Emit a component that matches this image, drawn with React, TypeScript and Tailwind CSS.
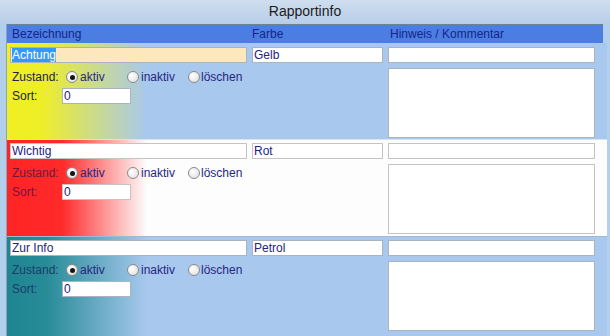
import React from "react";

const FONT = { fontFamily: '"Liberation Sans", Arial, sans-serif' };

function Radio({ checked }: { checked?: boolean }) {
  return (
    <span className="flex h-[12px] w-[12px] shrink-0 items-center justify-center rounded-full border border-[#8a8a8a] bg-[radial-gradient(circle_at_35%_35%,#ffffff,#dcdcdc)]">
      {checked && <span className="h-[5px] w-[5px] rounded-full bg-[#141414]" />}
    </span>
  );
}

type RowProps = {
  rowClass: string;
  labelClass: string;
  name: string;
  farbe: string;
  selected?: boolean;
  borderClass: string;
};

function Row({ rowClass, labelClass, name, farbe, selected, borderClass }: RowProps) {
  const inputBase = `h-[16px] border ${borderClass} text-[12px] leading-[14px] text-[#25237e] pl-[1px] whitespace-nowrap overflow-hidden`;
  return (
    <div className={rowClass}>
      <div className="flex gap-[5px] pl-[3px]">
        <div className="w-[237px] shrink-0">
          {selected ? (
            <div className={`${inputBase} bg-[#fde8bd]`}>
              <span className="bg-[#3399ff] text-white">Achtung</span>
            </div>
          ) : (
            <div className={`${inputBase} bg-white`}>{name}</div>
          )}
          <div className="mt-[6px] flex h-[16px] items-center text-[12px] pl-[2px]">
            <span className={`w-[54px] shrink-0 ${labelClass}`}>Zustand:</span>
            <span className="flex w-[61px] shrink-0 items-center gap-[2px]">
              <Radio checked />
              <span className="text-[#27267f]">aktiv</span>
            </span>
            <span className="flex w-[61px] shrink-0 items-center gap-[2px]">
              <Radio />
              <span className="text-[#27267f]">inaktiv</span>
            </span>
            <span className="flex w-[61px] shrink-0 items-center gap-[1px]">
              <Radio />
              <span className="text-[#27267f]">löschen</span>
            </span>
          </div>
          <div className="mt-[3px] flex h-[16px] items-center text-[12px] pl-[2px]">
            <span className={`w-[50px] shrink-0 ${labelClass}`}>Sort:</span>
            <div className={`${inputBase} w-[69px] bg-white`}>0</div>
          </div>
        </div>
        <div className="w-[131px] shrink-0">
          <div className={`${inputBase} bg-white`}>{farbe}</div>
        </div>
        <div className="w-[207px] shrink-0">
          <div className={`${inputBase} bg-white`} />
          <div className={`mt-[5px] h-[70px] border ${borderClass} bg-white`} />
        </div>
      </div>
    </div>
  );
}

export default function App() {
  return (
    <div style={FONT} className="h-[336px] w-[610px] overflow-hidden bg-[#b2cfec]">
      <div className="flex h-[24px] items-center justify-center bg-[linear-gradient(to_bottom,#cfdeef,#b7cde8)] pb-[1px] text-[14px] text-[#1c1c1c]">
        Rapportinfo
      </div>
      <div className="ml-[6px] w-[601px] border-l border-[#8aa2bc]">
        <div className="mr-[4px] flex h-[19px] items-center border-t border-[#6e8296] bg-[#4b7ee0] text-[12px] text-[#16248c]">
          <span className="w-[245px] shrink-0 pl-[5px]">Bezeichnung</span>
          <span className="w-[137px] shrink-0 pl-[0px]">Farbe</span>
          <span className="pl-[1px]">Hinweis / Kommentar</span>
        </div>
        <Row
          rowClass="h-[96px] pt-[4px] bg-[linear-gradient(to_right,#efef22_0px,#eeee28_35px,#a8c8ee_140px)]"
          labelClass="text-[#22224e]"
          name="Achtung"
          farbe="Gelb"
          selected
          borderClass="border-[#a9b4c0]"
        />
        <Row
          rowClass="h-[97px] pt-[3px] border-t border-[#d6e3f1] bg-[linear-gradient(to_right,#ff2424_0px,#ff2a2a_55px,#fdfdfd_140px)]"
          labelClass="text-[#6a1844]"
          name="Wichtig"
          farbe="Rot"
          borderClass="border-[#c4c4c4]"
        />
        <Row
          rowClass="h-[101px] pt-[3px] border-t border-[#9fb9d3] bg-[linear-gradient(to_right,#1e8590_0px,#288c98_40px,#a8c8ee_140px)]"
          labelClass="text-[#1b3b6b]"
          name="Zur Info"
          farbe="Petrol"
          borderClass="border-[#a9b4c0]"
        />
      </div>
    </div>
  );
}
